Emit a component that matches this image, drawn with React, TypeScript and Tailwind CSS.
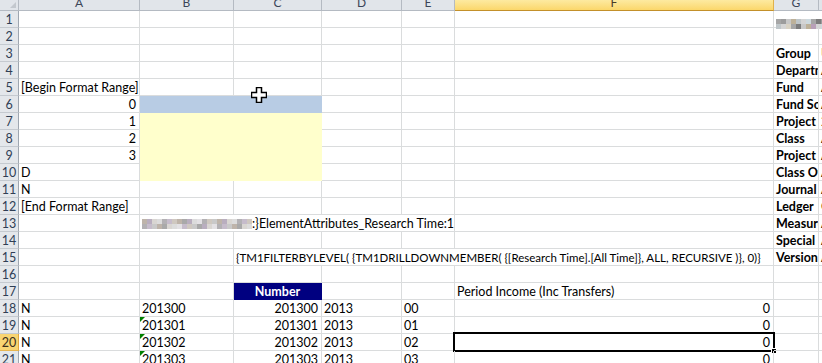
import React from 'react';

type Cell = {
  t?: React.ReactNode;
  span?: number;
  align?: 'l' | 'r' | 'c';
  cls?: string;
  fill?: string;
  tri?: boolean;
  sel?: boolean;
};

const COLS = ['A', 'B', 'C', 'D', 'E', 'F', 'G', 'H'];
const SPAN: Record<number, string> = { 2: 'col-span-2', 3: 'col-span-3', 4: 'col-span-4' };
const GRID = 'grid grid-cols-[19px_121px_94px_88px_80px_53px_319px_45px_60px]';

const MOSAIC = [
  'bg-[#c9c9c9]', 'bg-[#b3b1b4]', 'bg-[#d9d6d2]', 'bg-[#beb4aa]', 'bg-[#c6bccb]',
  'bg-[#dcdcdc]', 'bg-[#a9a9a9]', 'bg-[#cfc8c0]', 'bg-[#e3e1e4]', 'bg-[#b9aebf]',
];
const MOSAIC_G = [
  'bg-[#c8c8c8]', 'bg-[#a6a6a6]', 'bg-[#d4d4d4]', 'bg-[#bdb199]', 'bg-[#7d7d7d]',
  'bg-[#cdd9de]', 'bg-[#b8a0b8]', 'bg-[#9c9c9c]', 'bg-[#d8d2c4]', 'bg-[#bfc6c9]',
];

function Mosaic({ n, palette, seed }: { n: number; palette: string[]; seed: number }) {
  const blocks = [];
  for (let i = 0; i < n * 2; i++) {
    blocks.push(<span key={i} className={'block h-[5px] w-[5px] ' + palette[(i * 7 + seed + (i % 3)) % palette.length]} />);
  }
  return <span className="inline-grid grid-flow-col grid-rows-2 align-middle">{blocks}</span>;
}

const yellow = 'bg-[#ffffcc] border-[#ffffcc]';
const blue = 'bg-[#b8cce4] border-[#b8cce4]';
const b = (t: string): Cell => ({ t, cls: 'font-bold overflow-hidden' });

const rows: Record<number, Record<string, Cell>> = {
  1: { G: { span: 2, t: <span className="pt-[3px] block"><Mosaic n={10} palette={MOSAIC_G} seed={1} /></span> } },
  3: { G: b('Group'), H: { t: 'U' } },
  4: { G: b('Department'), H: { t: 'A' } },
  5: { A: { t: '[Begin Format Range]' }, G: b('Fund'), H: { t: 'A' } },
  6: { A: { t: '0', align: 'r' }, B: { span: 2, fill: blue }, G: b('Fund Source'), H: { t: 'A' } },
  7: { A: { t: '1', align: 'r' }, B: { span: 2, fill: yellow }, G: b('Project'), H: { t: '2' } },
  8: { A: { t: '2', align: 'r' }, B: { span: 2, fill: yellow }, G: b('Class'), H: { t: 'A' } },
  9: { A: { t: '3', align: 'r' }, B: { span: 2, fill: yellow }, G: b('Project Class'), H: { t: 'A' } },
  10: { A: { t: 'D' }, B: { span: 2, fill: yellow }, G: b('Class Owner'), H: { t: 'A' } },
  11: { A: { t: 'N' }, G: b('Journal Type'), H: { t: 'A' } },
  12: { A: { t: '[End Format Range]' }, G: b('Ledger'), H: { t: 'C' } },
  13: {
    B: {
      span: 4,
      t: (
        <span className="flex items-center">
          <Mosaic n={22} palette={MOSAIC} seed={3} />
          <span>{':}ElementAttributes_Research Time:1'}</span>
        </span>
      ),
      cls: 'pl-0',
    },
    G: b('Measure'),
    H: { t: 'A' },
  },
  14: { G: b('Special Code'), H: { t: 'A' } },
  15: {
    C: {
      span: 4,
      t: '{TM1FILTERBYLEVEL( {TM1DRILLDOWNMEMBER( {[Research Time].[All Time]}, ALL, RECURSIVE )}, 0)}',
      cls: 'text-[11.5px]',
    },
    G: b('Version'),
    H: { t: 'A' },
  },
  17: {
    C: { t: 'Number', align: 'c', fill: 'bg-[#000080] border-[#000080]', cls: 'text-white font-bold' },
    F: { t: 'Period Income (Inc Transfers)' },
  },
};

[18, 19, 20, 21].forEach((r, i) => {
  const n = '2013' + String(i).padStart(2, '0');
  rows[r] = {
    A: { t: 'N' },
    B: { t: n, tri: i > 0 },
    C: { t: n, align: 'r' },
    D: { t: '2013' },
    E: { t: String(i).padStart(2, '0') },
    F: { t: '0', align: 'r', sel: r === 20 },
  };
});

function SheetCell({ c }: { c?: Cell }) {
  const align = c?.align === 'r' ? 'text-right pr-[3px]' : c?.align === 'c' ? 'text-center' : 'text-left pl-[2px]';
  return (
    <div
      className={
        'relative h-[17px] border-r border-b whitespace-nowrap leading-[17px] ' +
        (c?.fill ?? 'border-[#dadcdd]') +
        ' ' +
        align +
        ' ' +
        (c?.span ? SPAN[c.span] : '') +
        ' ' +
        (c?.cls ?? '')
      }
    >
      {c?.tri && (
        <span className="absolute left-0 top-0 h-0 w-0 border-t-[5px] border-r-[5px] border-t-[#008000] border-r-transparent" />
      )}
      {c?.t}
      {c?.sel && (
        <span className="absolute -left-[2px] -top-[2px] -right-[2px] -bottom-[2px] border-2 border-black">
          <span className="absolute -right-[4px] -bottom-[4px] h-[6px] w-[6px] border border-white bg-black" />
        </span>
      )}
    </div>
  );
}

export default function App() {
  const rowNums = Array.from({ length: 21 }, (_, i) => i + 1);

  return (
    <div className="relative h-[363px] w-[822px] overflow-hidden bg-white font-[Lato,sans-serif] text-[12.5px] text-black">
      {/* column headers */}
      <div className={GRID + ' h-[11px]'}>
        <div className="relative h-[11px] border-r border-b border-[#b4bac2] bg-[#e1e5ea]">
          <span className="absolute right-[2px] bottom-[2px] h-0 w-0 border-b-[6px] border-l-[6px] border-b-[#c3c8ce] border-l-transparent" />
        </div>
        {COLS.map((c) =>
          c === 'F' ? (
            <div key={c} className="flex h-[11px] items-end justify-center border-r border-b border-r-[#e0b24c] border-b-[#c3902a] bg-gradient-to-b from-[#fdeaa0] to-[#fbd76a] pb-[1px] text-[12px] leading-none text-[#4a3c28]">
              {c}
            </div>
          ) : (
            <div key={c} className="flex h-[11px] items-end justify-center border-r border-b border-r-[#b4bac2] border-b-[#b4bac2] bg-[#e1e5ea] pb-[1px] text-[12px] leading-none text-[#3b4658]">
              {c}
            </div>
          )
        )}
      </div>

      {rowNums.map((r) => {
        const row = rows[r] ?? {};
        const cells: React.ReactNode[] = [];
        for (let i = 0; i < COLS.length; ) {
          const c = row[COLS[i]];
          cells.push(<SheetCell key={COLS[i]} c={c} />);
          i += c?.span ?? 1;
        }
        return (
          <div key={r} className={GRID}>
            <div
              className={
                'h-[17px] border-r border-b text-center text-[12.5px] leading-[17px] ' +
                (r === 20
                  ? 'border-r-[#e0a53c] border-b-[#e8b650] bg-[#f8d472] text-[#3a2f1c]'
                  : 'border-r-[#9ea6b0] border-b-[#c5cad0] bg-[#e4e7eb] text-[#2f3e55]')
              }
            >
              {r}
            </div>
            {cells}
          </div>
        );
      })}

      {/* mouse cursor */}
      <svg className="absolute left-[251px] top-[87px]" width="16" height="16" viewBox="0 0 16 16">
        <polygon
          points="5.5,0.5 10.5,0.5 10.5,5.5 15.5,5.5 15.5,10.5 10.5,10.5 10.5,15.5 5.5,15.5 5.5,10.5 0.5,10.5 0.5,5.5 5.5,5.5"
          fill="#fff"
          stroke="#000"
          strokeWidth="1.5"
        />
      </svg>
    </div>
  );
}
